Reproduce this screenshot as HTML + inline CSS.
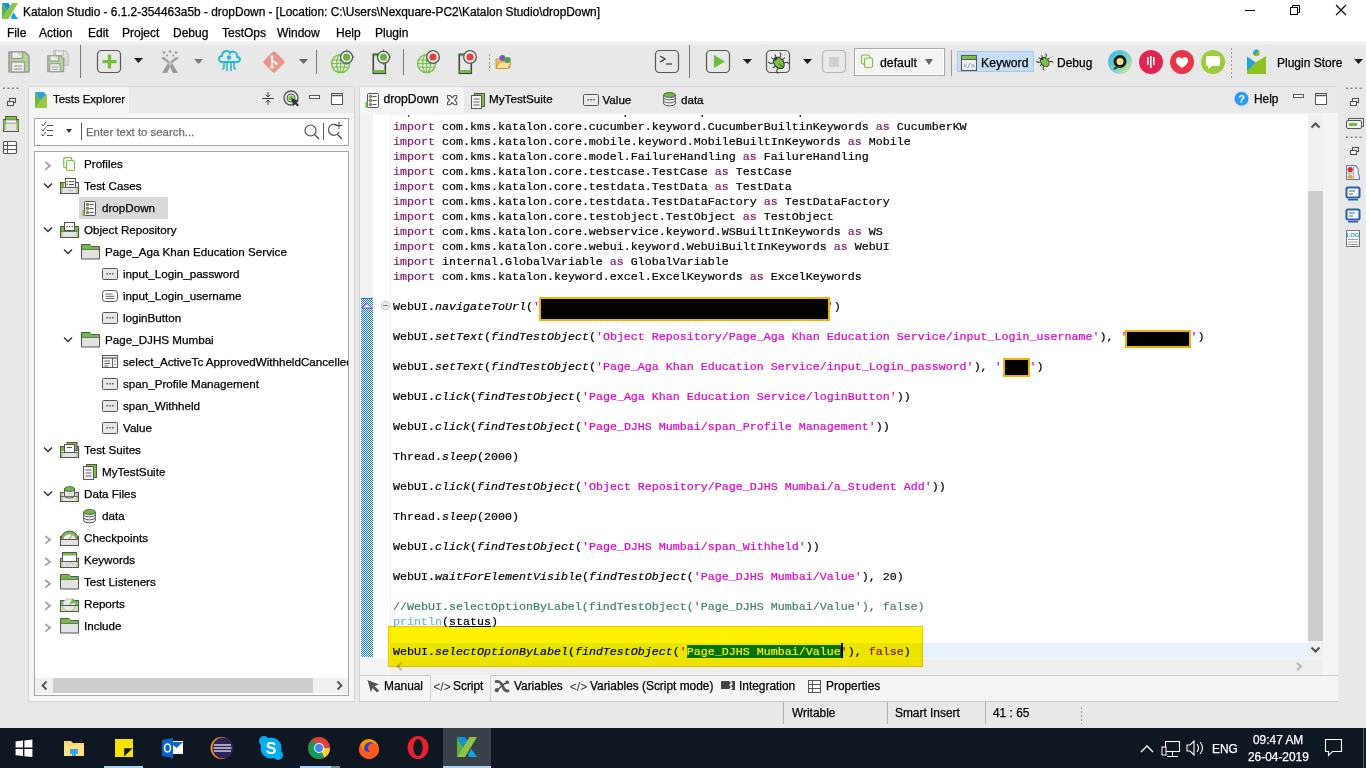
<!DOCTYPE html><html><head><meta charset="utf-8"><style>
*{margin:0;padding:0;box-sizing:border-box}
html,body{width:1366px;height:768px;overflow:hidden;background:#e8e8e8;font-family:"Liberation Sans",sans-serif;font-size:12px;color:#000;position:relative}
.a{position:absolute}
.t{position:absolute;white-space:pre;line-height:1;-webkit-text-stroke:0.25px currentColor}
svg{position:absolute;overflow:visible}
.cl{position:absolute;white-space:pre;-webkit-text-stroke:0.2px currentColor;font-family:"Liberation Mono",monospace;font-size:11.67px;line-height:15px;height:15px;color:#000}
.kw{color:#85186a}
.st{color:#e000d0}
.it{font-style:italic}
.cm{color:#3f7f6c}
.pl{color:#62b6f6}
</style></head><body><div class="a" style="left:0px;top:0px;width:1366px;height:41px;background:#fff"></div>
<div class="a" style="left:0px;top:41px;width:1366px;height:5px;background:linear-gradient(#f6f6f6,#e8e8e8)"></div>
<svg style="left:0px;top:0px" width="20" height="20" viewBox="0 0 20 20"><polygon points="2,3 2,19 7,11" fill="#5aaf45"/><polygon points="2,3 8.5,3 10.3,6 7,11" fill="#0d96dc"/><polygon points="2,19 12,3 18,3 8.5,19" fill="#8dc443"/><polygon points="11,16.5 13.5,12.5 18,19 11.5,19" fill="#0aa6e8"/></svg>
<div class="t" style="left:23px;top:7.25px;font-size:11.88px;color:#000;">Katalon Studio - 6.1.2-354463a5b - dropDown - [Location: C:\Users\Nexquare-PC2\Katalon Studio\dropDown]</div>
<svg style="left:1245px;top:5px" width="12" height="12" viewBox="0 0 12 12"><line x1="0" y1="5.5" x2="10" y2="5.5" stroke="#000" stroke-width="1"/></svg>
<svg style="left:1290px;top:5px" width="12" height="12" viewBox="0 0 12 12"><rect x="0.5" y="2.5" width="7" height="7" fill="none" stroke="#000"/><polyline points="2.5,2.5 2.5,0.5 9.5,0.5 9.5,7.5 7.5,7.5" fill="none" stroke="#000"/></svg>
<svg style="left:1336px;top:5px" width="12" height="12" viewBox="0 0 12 12"><line x1="0" y1="0" x2="10" y2="10" stroke="#000" stroke-width="1.1"/><line x1="10" y1="0" x2="0" y2="10" stroke="#000" stroke-width="1.1"/></svg>
<div class="t" style="left:7px;top:27.14px;font-size:12px;color:#000;">File</div>
<div class="t" style="left:39px;top:27.14px;font-size:12px;color:#000;">Action</div>
<div class="t" style="left:88px;top:27.14px;font-size:12px;color:#000;">Edit</div>
<div class="t" style="left:122px;top:27.14px;font-size:12px;color:#000;">Project</div>
<div class="t" style="left:173px;top:27.14px;font-size:12px;color:#000;">Debug</div>
<div class="t" style="left:222px;top:27.14px;font-size:12px;color:#000;">TestOps</div>
<div class="t" style="left:277px;top:27.14px;font-size:12px;color:#000;">Window</div>
<div class="t" style="left:336px;top:27.14px;font-size:12px;color:#000;">Help</div>
<div class="t" style="left:375px;top:27.14px;font-size:12px;color:#000;">Plugin</div>
<svg style="left:0px;top:44px" width="80" height="40" viewBox="0 0 80 40"><g transform="translate(8,7) scale(1.0)" opacity="1.0"><path d="M1,1 H17 L21,5 V21 H1 Z" fill="#b1d793" stroke="#9a9a9a" stroke-width="1.6" stroke-linejoin="round"/>
<rect x="3.5" y="1" width="11" height="6.5" fill="#f0f0f0" stroke="#9a9a9a" stroke-width="1.4"/><rect x="10.5" y="1" width="2" height="3.5" fill="#b1d793"/>
<rect x="3.5" y="11" width="13" height="10" fill="#f0f0f0" stroke="#9a9a9a" stroke-width="1.4"/><line x1="6" y1="15" x2="14" y2="15" stroke="#9a9a9a" stroke-width="1.2"/><line x1="6" y1="18" x2="14" y2="18" stroke="#9a9a9a" stroke-width="1.2"/></g><g transform="translate(53,6) scale(0.7272727272727273)" opacity="0.55"><path d="M1,1 H17 L21,5 V21 H1 Z" fill="#cfe6bb" stroke="#9a9a9a" stroke-width="1.6" stroke-linejoin="round"/>
<rect x="3.5" y="1" width="11" height="6.5" fill="#f0f0f0" stroke="#9a9a9a" stroke-width="1.4"/><rect x="10.5" y="1" width="2" height="3.5" fill="#cfe6bb"/>
<rect x="3.5" y="11" width="13" height="10" fill="#f0f0f0" stroke="#9a9a9a" stroke-width="1.4"/><line x1="6" y1="15" x2="14" y2="15" stroke="#9a9a9a" stroke-width="1.2"/><line x1="6" y1="18" x2="14" y2="18" stroke="#9a9a9a" stroke-width="1.2"/></g><g transform="translate(47,11) scale(0.7954545454545454)" opacity="1.0"><path d="M1,1 H17 L21,5 V21 H1 Z" fill="#b1d793" stroke="#9a9a9a" stroke-width="1.6" stroke-linejoin="round"/>
<rect x="3.5" y="1" width="11" height="6.5" fill="#f0f0f0" stroke="#9a9a9a" stroke-width="1.4"/><rect x="10.5" y="1" width="2" height="3.5" fill="#b1d793"/>
<rect x="3.5" y="11" width="13" height="10" fill="#f0f0f0" stroke="#9a9a9a" stroke-width="1.4"/><line x1="6" y1="15" x2="14" y2="15" stroke="#9a9a9a" stroke-width="1.2"/><line x1="6" y1="18" x2="14" y2="18" stroke="#9a9a9a" stroke-width="1.2"/></g></svg>
<div class="a" style="left:80px;top:45px;width:1px;height:33px;background:#7a7a7a"></div>
<svg style="left:0px;top:0px" width="1366" height="90" viewBox="0 0 1366 90"><rect x="97.5" y="50.5" width="23" height="22" rx="4" fill="none" stroke="#555" stroke-width="1.2"/><rect x="102.5" y="60" width="14" height="3.2" fill="#76bb3a"/><rect x="107.9" y="54.5" width="3.2" height="14" fill="#76bb3a"/><path d="M109,54 h2 v5 h5 v2 h-5 v5 h-2 v-5 h-5 v-2 h5z" fill="none"/></svg>
<svg style="left:133.5px;top:58px" width="9" height="6" viewBox="0 0 9 6"><polygon points="0,0 9,0 4.5,5" fill="#1a1a1a"/></svg>
<svg style="left:159px;top:50px" width="22" height="24" viewBox="0 0 22 24"><circle cx="5" cy="2.5" r="1.3" fill="#999"/><circle cx="11" cy="1.5" r="1.3" fill="#999"/><circle cx="17" cy="2.5" r="1.3" fill="#999"/><circle cx="8" cy="5.5" r="1" fill="#999"/><circle cx="14" cy="5.5" r="1" fill="#999"/><path d="M2,8 L9,13 L3,23 L8,23 L11,17 L14,23 L19,23 L13,13 L20,8 L17,7 L11,12 L5,7Z" fill="#9a9a9a"/><path d="M11,12 L9,13 L11,17 L13,13Z" fill="#c8c8c8"/></svg>
<svg style="left:193.5px;top:59px" width="9" height="6" viewBox="0 0 9 6"><polygon points="0,0 9,0 4.5,5" fill="#777"/></svg>
<svg style="left:217px;top:49px" width="24" height="26" viewBox="0 0 24 26"><path d="M5,13 C1,13 1,7 5,7 C5,2 11,0 13,4 C15,1 21,3 20,8 C24,8 24,13 20,13 Z" fill="none" stroke="#1fb5d4" stroke-width="1.8"/><circle cx="12" cy="8.5" r="2.2" fill="#1fb5d4"/><g stroke="#1fb5d4" stroke-width="1.5" fill="none"><path d="M7,13 v5 q0,2 -2,2"/><path d="M10,13 v9"/><path d="M14,13 v9"/><path d="M17,13 v5 q0,2 2,2"/></g></svg>
<svg style="left:262px;top:50px" width="24" height="24" viewBox="0 0 24 24"><rect x="4" y="4" width="16" height="16" rx="2" transform="rotate(45 12 12)" fill="#e9978a"/><g stroke="#fff" stroke-width="1.5" fill="none"><path d="M10,7 L10,17"/><path d="M10,10 L14,13"/></g><circle cx="10" cy="17" r="1.6" fill="#fff"/><circle cx="14" cy="13.5" r="1.6" fill="#fff"/><circle cx="10" cy="7" r="1.4" fill="#fff"/></svg>
<svg style="left:298.5px;top:59px" width="9" height="6" viewBox="0 0 9 6"><polygon points="0,0 9,0 4.5,5" fill="#666"/></svg>
<div class="a" style="left:316px;top:50px;width:1px;height:24px;background:#7a7a7a"></div>
<svg style="left:0px;top:0px" width="1366" height="90" viewBox="0 0 1366 90"><g><circle cx="340.6" cy="63.6" r="9" fill="none" stroke="#76c043" stroke-width="1.4"/><ellipse cx="340.6" cy="63.6" rx="4" ry="9" fill="none" stroke="#76c043" stroke-width="1.2"/><line x1="340.6" y1="54.6" x2="340.6" y2="72.6" stroke="#76c043" stroke-width="1.1"/><line x1="332.5" y1="60" x2="348.7" y2="60" stroke="#76c043" stroke-width="1.1"/><line x1="331.6" y1="63.6" x2="349.6" y2="63.6" stroke="#76c043" stroke-width="1.1"/><line x1="332.5" y1="67.2" x2="348.7" y2="67.2" stroke="#76c043" stroke-width="1.1"/></g><circle cx="346.6" cy="57.2" r="6" fill="#f2f2f2" stroke="#555" stroke-width="1.3"/><circle cx="346.6" cy="57.2" r="3.6" fill="#6bb33a"/><g stroke="#555" stroke-width="1"><line x1="346.6" y1="49.7" x2="346.6" y2="51.7"/><line x1="352.1" y1="57.2" x2="354.1" y2="57.2"/><line x1="346.6" y1="62.7" x2="346.6" y2="64.7"/></g><rect x="373.3" y="54.3" width="12" height="19" fill="none" stroke="#444" stroke-width="1.6"/><rect x="373.3" y="70.0" width="12" height="2.5" fill="#6cbf3c"/><rect x="374.0" y="54.7" width="4" height="1.5" fill="#6cbf3c"/><circle cx="383.5" cy="57.2" r="6" fill="#f2f2f2" stroke="#555" stroke-width="1.3"/><circle cx="383.5" cy="57.2" r="3.6" fill="#6bb33a"/><g stroke="#555" stroke-width="1"><line x1="383.5" y1="49.7" x2="383.5" y2="51.7"/><line x1="389.0" y1="57.2" x2="391.0" y2="57.2"/><line x1="383.5" y1="62.7" x2="383.5" y2="64.7"/></g><g><circle cx="426.6" cy="63.6" r="9" fill="none" stroke="#76c043" stroke-width="1.4"/><ellipse cx="426.6" cy="63.6" rx="4" ry="9" fill="none" stroke="#76c043" stroke-width="1.2"/><line x1="426.6" y1="54.6" x2="426.6" y2="72.6" stroke="#76c043" stroke-width="1.1"/><line x1="418.5" y1="60" x2="434.7" y2="60" stroke="#76c043" stroke-width="1.1"/><line x1="417.6" y1="63.6" x2="435.6" y2="63.6" stroke="#76c043" stroke-width="1.1"/><line x1="418.5" y1="67.2" x2="434.7" y2="67.2" stroke="#76c043" stroke-width="1.1"/></g><circle cx="433" cy="57" r="6.3" fill="#f2f2f2" stroke="#555" stroke-width="1.3"/><circle cx="433" cy="57" r="3.6" fill="#ee3b3b"/><rect x="459.3" y="54.3" width="12" height="19" fill="none" stroke="#444" stroke-width="1.6"/><rect x="459.3" y="70.0" width="12" height="2.5" fill="#6cbf3c"/><rect x="460.0" y="54.7" width="4" height="1.5" fill="#6cbf3c"/><circle cx="470" cy="57" r="6.3" fill="#f2f2f2" stroke="#555" stroke-width="1.3"/><circle cx="470" cy="57" r="3.6" fill="#ee3b3b"/></svg>
<div class="a" style="left:403px;top:49px;width:1px;height:26px;background:#7a7a7a"></div>
<svg style="left:489px;top:54px" width="2" height="18" viewBox="0 0 2 18"><line x1="0.5" y1="0" x2="0.5" y2="17" stroke="#999" stroke-dasharray="2,2"/></svg>
<svg style="left:495px;top:53px" width="18" height="17" viewBox="0 0 18 17"><path d="M1,6 h4 l1,-1 h9 v10 h-14z" fill="#f2c46a" stroke="#b78a30" stroke-width="0.8"/><path d="M1,15.5 l3,-6.5 h12 l-3,6.5z" fill="#fbdf98" stroke="#b78a30" stroke-width="0.8"/><circle cx="7.3" cy="5" r="3" fill="#6a5fb8"/><circle cx="12.5" cy="7" r="3" fill="#4fa04f"/></svg>
<svg style="left:0px;top:0px" width="1366" height="90" viewBox="0 0 1366 90"><rect x="655.5" y="50.5" width="23" height="22" rx="4" fill="none" stroke="#555" stroke-width="1.2"/><polyline points="660,56 665,59 660,62" fill="none" stroke="#333" stroke-width="1.2"/><line x1="666" y1="64" x2="672" y2="64" stroke="#333" stroke-width="1.2"/></svg>
<div class="a" style="left:689px;top:45px;width:1px;height:33px;background:#7a7a7a"></div>
<svg style="left:0px;top:0px" width="1366" height="90" viewBox="0 0 1366 90"><rect x="706.5" y="50.5" width="23" height="22" rx="4" fill="none" stroke="#555" stroke-width="1.2"/><polygon points="714,55 714,68 725,61.5" fill="#6cbf3c"/></svg>
<svg style="left:742.5px;top:58.5px" width="9" height="6" viewBox="0 0 9 6"><polygon points="0,0 9,0 4.5,5" fill="#1a1a1a"/></svg>
<svg style="left:0px;top:0px" width="1366" height="90" viewBox="0 0 1366 90"><rect x="766.5" y="50.5" width="23" height="22" rx="4" fill="none" stroke="#555" stroke-width="1.2"/><g transform="rotate(-40 778.5 62.5)"><g stroke="#333" stroke-width="1" fill="none"><path d="M774,59.5 L771.5,58 L771,55.5"/><path d="M783,59.5 L785.5,58 L786,55.5"/><path d="M774,63 L770.5,63"/><path d="M783,63 L786.5,63"/><path d="M774,66.5 L771.5,68 L771,70.5"/><path d="M783,66.5 L785.5,68 L786,70.5"/><path d="M777,56.5 L776,54"/><path d="M780,56.5 L781,54"/></g><ellipse cx="778.5" cy="63" rx="4.6" ry="6.3" fill="#7cc242" stroke="#2f3a2a" stroke-width="1.1"/><ellipse cx="778.5" cy="57.8" rx="2.2" ry="1.4" fill="#333"/><line x1="778.5" y1="64" x2="778.5" y2="68" stroke="#333" stroke-width="0.9"/></g></svg>
<svg style="left:802.5px;top:58.5px" width="9" height="6" viewBox="0 0 9 6"><polygon points="0,0 9,0 4.5,5" fill="#1a1a1a"/></svg>
<svg style="left:0px;top:0px" width="1366" height="90" viewBox="0 0 1366 90"><rect x="822.5" y="50.5" width="23" height="22" rx="4" fill="none" stroke="#b5b5b5" stroke-width="1.2"/><rect x="829" y="57" width="10" height="10" fill="#cfcfcf"/></svg>
<div class="a" style="left:854px;top:48px;width:91px;height:28px;background:#f4f4f4;border:1px solid #a8a8a8"></div>
<div class="a" style="left:855px;top:49px;width:89px;height:26px;border:1px solid #fff"></div>
<svg style="left:860px;top:54px" width="16" height="16" viewBox="0 0 16 16"><rect x="1.5" y="1" width="8" height="9" rx="1.5" fill="none" stroke="#7cc242" stroke-width="1.2"/><rect x="4.5" y="4" width="8" height="9.5" rx="1.5" fill="#f4f4f4" stroke="#7cc242" stroke-width="1.2"/></svg>
<div class="t" style="left:880px;top:56.87px;font-size:12.3px;color:#000;">default</div>
<svg style="left:925px;top:59px" width="8" height="6" viewBox="0 0 8 6"><polygon points="0,0 8,0 4,6" fill="#666"/></svg>
<div class="a" style="left:951px;top:50px;width:1px;height:26px;background:#9a9a9a"></div>
<div class="a" style="left:957px;top:51px;width:77px;height:21px;background:#c6def5;border:1px solid #a6c8ec"></div>
<svg style="left:961px;top:55px" width="16" height="16" viewBox="0 0 16 16"><rect x="0.5" y="0.5" width="15" height="15" fill="#eef2f6" stroke="#555" stroke-width="1.1"/><rect x="1" y="1" width="14" height="3" fill="#7cc242"/><line x1="0.5" y1="4.5" x2="15.5" y2="4.5" stroke="#555" stroke-width="1"/><text x="8" y="12.5" font-size="6.5" font-family="Liberation Mono" text-anchor="middle" fill="#666">&lt;/&gt;</text></svg>
<div class="t" style="left:981px;top:56.96px;font-size:12.2px;color:#000;">Keyword</div>
<svg style="left:0px;top:0px" width="1366" height="90" viewBox="0 0 1366 90"><g transform="translate(1044.5,62) scale(0.8) translate(-778.5,-63) rotate(-40 778.5 62.5)"><g stroke="#333" stroke-width="1.2" fill="none"><path d="M774,59.5 L771.5,58 L771,55.5"/><path d="M783,59.5 L785.5,58 L786,55.5"/><path d="M774,63 L770.5,63"/><path d="M783,63 L786.5,63"/><path d="M774,66.5 L771.5,68 L771,70.5"/><path d="M783,66.5 L785.5,68 L786,70.5"/><path d="M777,56.5 L776,54"/><path d="M780,56.5 L781,54"/></g><ellipse cx="778.5" cy="63" rx="4.6" ry="6.3" fill="#7cc242" stroke="#2f3a2a" stroke-width="1.2"/><ellipse cx="778.5" cy="57.8" rx="2.2" ry="1.4" fill="#333"/></g></svg>
<div class="t" style="left:1057px;top:57.14px;font-size:12px;color:#000;">Debug</div>
<svg style="left:1108px;top:50px" width="24" height="24" viewBox="0 0 24 24"><defs><linearGradient id="g1" x1="0" y1="0" x2="1" y2="1"><stop offset="0" stop-color="#28b5e0"/><stop offset="0.6" stop-color="#86d4c8"/><stop offset="1" stop-color="#f2e27a"/></linearGradient></defs><circle cx="12" cy="12" r="12" fill="url(#g1)"/><circle cx="12" cy="11.5" r="6.5" fill="#1a1a1a"/><path d="M7,17 l-2,3 l5,-2z" fill="#1a1a1a"/><circle cx="12" cy="11.5" r="3.5" fill="#f3e27a"/></svg>
<svg style="left:1139px;top:50px" width="24" height="24" viewBox="0 0 24 24"><circle cx="12" cy="12" r="12" fill="#df2650"/><g fill="#fff"><rect x="8" y="7" width="1.6" height="8"/><rect x="11" y="6" width="1.6" height="12"/><rect x="14" y="7" width="1.6" height="8"/></g></svg>
<svg style="left:1170px;top:50px" width="24" height="24" viewBox="0 0 24 24"><circle cx="12" cy="12" r="12" fill="#e8354a"/><path d="M12,18 C6,14 5,11 6.5,8.5 C8,6.5 11,7 12,9 C13,7 16,6.5 17.5,8.5 C19,11 18,14 12,18Z" fill="#fff"/></svg>
<svg style="left:1201px;top:50px" width="24" height="24" viewBox="0 0 24 24"><circle cx="12" cy="12" r="12" fill="#9ccc3a"/><path d="M5,8 q0,-2 2,-2 h10 q2,0 2,2 v6 q0,2 -2,2 h-6 l-4,3 v-3 q-2,0 -2,-2z" fill="#fff"/></svg>
<svg style="left:1231px;top:48px" width="2" height="30" viewBox="0 0 2 30"><line x1="0.5" y1="0" x2="0.5" y2="30" stroke="#999" stroke-dasharray="2,2"/></svg>
<svg style="left:0px;top:0px" width="1366" height="90" viewBox="0 0 1366 90"><polygon points="1247,56.5 1255.5,62.5 1266,56 1266,74 1247,74" fill="#8cc21f"/><polygon points="1247,56.5 1255.5,62.5 1247,71" fill="#27a1de"/><circle cx="1256.5" cy="53" r="3.2" fill="#8cc21f"/><path d="M1254.2,55.3 A3.2,3.2 0 0 1 1258.8,50.7Z" fill="#27a1de"/></svg>
<div class="t" style="left:1277px;top:56.64px;font-size:12px;color:#000;">Plugin Store</div>
<svg style="left:1353.5px;top:58.5px" width="9" height="6" viewBox="0 0 9 6"><polygon points="0,0 9,0 4.5,5" fill="#1a1a1a"/></svg>
<svg style="left:0px;top:0px" width="30" height="160" viewBox="0 0 30 160"><rect x="3.0" y="87.5" width="2" height="1.5" fill="#8a8070"/><rect x="7.5" y="87.5" width="2" height="1.5" fill="#8a8070"/><rect x="12.0" y="87.5" width="2" height="1.5" fill="#8a8070"/><rect x="16.5" y="87.5" width="2" height="1.5" fill="#8a8070"/><rect x="9.5" y="98.5" width="6" height="4" fill="#f5f5f5" stroke="#5a5048" stroke-width="1.1"/><rect x="7.5" y="101.5" width="6" height="4" fill="#f5f5f5" stroke="#5a5048" stroke-width="1.1"/><rect x="3.5" y="119.5" width="15" height="12" fill="#e4e4e4" stroke="#555" stroke-width="1"/><rect x="5.5" y="116.5" width="11" height="4" fill="#7cc242" stroke="#555" stroke-width="1"/><rect x="5.5" y="120" width="11" height="3" fill="#fff" stroke="#555" stroke-width="0.6"/><rect x="3.5" y="120" width="2" height="10" fill="#7cc242"/><rect x="16.5" y="120" width="2" height="10" fill="#7cc242"/><rect x="3.5" y="141.5" width="13" height="12" rx="1" fill="#f8f8f8" stroke="#555" stroke-width="1.1"/><line x1="3.5" y1="145.5" x2="16.5" y2="145.5" stroke="#555" stroke-width="1"/><line x1="3.5" y1="149.5" x2="16.5" y2="149.5" stroke="#555" stroke-width="1"/><line x1="7.5" y1="141.5" x2="7.5" y2="153.5" stroke="#555" stroke-width="1"/></svg>
<div class="a" style="left:28px;top:86px;width:327px;height:616px;background:#f5f5f5;border:1px solid #d4d4d4;border-radius:3px 3px 0 0"></div>
<div class="a" style="left:29px;top:87px;width:325px;height:26px;background:#e9e9e9"></div>
<div class="a" style="left:29px;top:87px;width:100px;height:26px;background:#f5f5f5;border-radius:3px 3px 0 0"></div>
<svg style="left:35px;top:92px" width="12" height="16" viewBox="0 0 12 16"><polygon points="0,0 8.5,0 12,3 12,16 0,16" fill="#9bc842"/><polygon points="0,0 5.8,7.8 0,16" fill="#6cb844"/><polygon points="0,0 8.5,0 11,2.5 5.8,7.8" fill="#27a4dd"/></svg>
<div class="t" style="left:53px;top:93.68px;font-size:11.4px;color:#000;">Tests Explorer</div>
<svg style="left:0px;top:0px" width="360" height="120" viewBox="0 0 360 120"><g stroke="#444" stroke-width="1"><line x1="262" y1="98.5" x2="274" y2="98.5"/><line x1="268" y1="92" x2="268" y2="97"/><polyline points="265.5,94.5 268,97 270.5,94.5" fill="none"/><line x1="268" y1="100" x2="268" y2="105"/><polyline points="265.5,102.5 268,100 270.5,102.5" fill="none"/></g><circle cx="291" cy="98" r="7" fill="none" stroke="#555" stroke-width="1.4"/><circle cx="291" cy="98" r="4" fill="none" stroke="#555" stroke-width="1"/><circle cx="291" cy="98" r="2.6" fill="#7cc242"/><path d="M291,98 l8,3 l-3,1 l3,3 l-1.5,1.5 l-3,-3 l-1,3z" fill="#333"/><rect x="309.5" y="95.5" width="10" height="3" fill="#fff" stroke="#555" stroke-width="1"/><rect x="331.5" y="93.5" width="11" height="11" fill="#fff" stroke="#555" stroke-width="1"/><line x1="331.5" y1="95.5" x2="342.5" y2="95.5" stroke="#555" stroke-width="1.5"/></svg>
<div class="a" style="left:34px;top:118px;width:315px;height:28px;background:#fff;border:1px solid #a5a5a5"></div>
<svg style="left:0px;top:110px" width="360" height="40" viewBox="0 0 360 40"><g stroke="#555" stroke-width="1" fill="none"><polyline points="41.5,14 43,16 46,12"/><polyline points="41.5,19 43,21 46,17"/><polyline points="41.5,24 43,26 46,22"/><line x1="47" y1="15.5" x2="53" y2="15.5"/><line x1="47" y1="20.5" x2="53" y2="20.5"/><line x1="47" y1="25.5" x2="53" y2="25.5"/></g><polygon points="66,19 72,19 69,23" fill="#333"/><line x1="81.5" y1="13" x2="81.5" y2="30" stroke="#555"/><circle cx="310.5" cy="20.5" r="5.5" fill="none" stroke="#444" stroke-width="1.1"/><line x1="314.5" y1="24.5" x2="319" y2="29" stroke="#444" stroke-width="1.1"/><line x1="323.5" y1="13" x2="323.5" y2="30" stroke="#555"/><path d="M338,16 A5.5,5.5 0 1 0 339,22" fill="none" stroke="#444" stroke-width="1.1"/><line x1="337.5" y1="24.5" x2="342" y2="29" stroke="#444" stroke-width="1.1"/><line x1="339" y1="12" x2="339" y2="19" stroke="#444"/><line x1="335.5" y1="15.5" x2="342.5" y2="15.5" stroke="#444"/></svg>
<div class="t" style="left:86px;top:126.68px;font-size:11.4px;color:#6d6d6d;">Enter text to search...</div>
<div class="a" style="left:34px;top:151px;width:315px;height:545px;background:#fff;border:1px solid #a5a5a5"></div>
<div class="a" style="left:79px;top:197px;width:89px;height:22px;background:#d9d9d9"></div>
<div class="a" style="left:35px;top:152px;width:313px;height:524px;overflow:hidden">
<div class="t" style="left:49px;top:6.46px;font-size:11.65px;color:#000;">Profiles</div>
<div class="t" style="left:49px;top:28.46px;font-size:11.65px;color:#000;">Test Cases</div>
<div class="t" style="left:67px;top:50.46px;font-size:11.65px;color:#000;">dropDown</div>
<div class="t" style="left:49px;top:72.46px;font-size:11.65px;color:#000;">Object Repository</div>
<div class="t" style="left:70px;top:94.46px;font-size:11.65px;color:#000;">Page_Aga Khan Education Service</div>
<div class="t" style="left:88px;top:116.46px;font-size:11.65px;color:#000;">input_Login_password</div>
<div class="t" style="left:88px;top:138.46px;font-size:11.65px;color:#000;">input_Login_username</div>
<div class="t" style="left:88px;top:160.46px;font-size:11.65px;color:#000;">loginButton</div>
<div class="t" style="left:70px;top:182.46px;font-size:11.65px;color:#000;">Page_DJHS Mumbai</div>
<div class="t" style="left:88px;top:204.46px;font-size:11.65px;color:#000;">select_ActiveTc ApprovedWithheldCancelledRejected</div>
<div class="t" style="left:88px;top:226.46px;font-size:11.65px;color:#000;">span_Profile Management</div>
<div class="t" style="left:88px;top:248.46px;font-size:11.65px;color:#000;">span_Withheld</div>
<div class="t" style="left:88px;top:270.46px;font-size:11.65px;color:#000;">Value</div>
<div class="t" style="left:49px;top:292.46px;font-size:11.65px;color:#000;">Test Suites</div>
<div class="t" style="left:67px;top:314.46px;font-size:11.65px;color:#000;">MyTestSuite</div>
<div class="t" style="left:49px;top:336.46px;font-size:11.65px;color:#000;">Data Files</div>
<div class="t" style="left:67px;top:358.46px;font-size:11.65px;color:#000;">data</div>
<div class="t" style="left:49px;top:380.46px;font-size:11.65px;color:#000;">Checkpoints</div>
<div class="t" style="left:49px;top:402.46px;font-size:11.65px;color:#000;">Keywords</div>
<div class="t" style="left:49px;top:424.46px;font-size:11.65px;color:#000;">Test Listeners</div>
<div class="t" style="left:49px;top:446.46px;font-size:11.65px;color:#000;">Reports</div>
<div class="t" style="left:49px;top:468.46px;font-size:11.65px;color:#000;">Include</div>
</div>
<svg style="left:0px;top:0px" width="360" height="700" viewBox="0 0 360 700"><polyline points="45.2,162 50.0,165.8 45.2,169.6" fill="none" stroke="#a0a0a0" stroke-width="1.8"/><rect x="63.7" y="157.7" width="8" height="10" rx="1.5" fill="none" stroke="#7cc242" stroke-width="1.2"/><rect x="66.5" y="160.5" width="8" height="10" rx="1.5" fill="#fff" stroke="#7cc242" stroke-width="1.2"/><polyline points="44,183.5 48,187.5 52,183.5" fill="none" stroke="#333" stroke-width="1.5"/><rect x="60.5" y="182.5" width="18" height="11" fill="#e4e4e4" stroke="#555" stroke-width="1"/><rect x="61" y="183" width="3" height="4" fill="#6cbf3c"/><rect x="65.5" y="178.5" width="10" height="9" fill="#fff" stroke="#555" stroke-width="1"/><g stroke="#555" stroke-width="1"><line x1="69" y1="181.5" x2="74" y2="181.5"/><line x1="69" y1="184.5" x2="74" y2="184.5"/></g><circle cx="67.3" cy="181.5" r="0.9" fill="#6cbf3c"/><circle cx="67.3" cy="184.5" r="0.9" fill="#6cbf3c"/><line x1="60.5" y1="187.5" x2="78.5" y2="187.5" stroke="#555" stroke-width="0.8"/><rect x="61" y="188" width="2" height="5" fill="#a9d88a"/><rect x="76" y="188" width="2" height="5" fill="#a9d88a"/><line x1="68" y1="190.5" x2="73" y2="190.5" stroke="#bbb"/><rect x="84.5" y="201.5" width="11" height="14" rx="1" fill="#f4f4f4" stroke="#555" stroke-width="1"/><rect x="82.5" y="210" width="2" height="6" fill="#6cbf3c"/><g fill="#7cb84a" stroke="#555" stroke-width="0.8"><circle cx="87.5" cy="204.5" r="1.2"/><circle cx="87.5" cy="208.5" r="1.2"/><circle cx="87.5" cy="212.5" r="1.2"/></g><g stroke="#555" stroke-width="1"><line x1="89.5" y1="204.5" x2="93.5" y2="204.5"/><line x1="89.5" y1="208.5" x2="93.5" y2="208.5"/><line x1="89.5" y1="212.5" x2="93.5" y2="212.5"/></g><polyline points="44,227.5 48,231.5 52,227.5" fill="none" stroke="#333" stroke-width="1.5"/><rect x="60.5" y="226.5" width="18" height="11" fill="#e4e4e4" stroke="#555" stroke-width="1"/><rect x="61" y="227" width="3" height="4" fill="#6cbf3c"/><rect x="75" y="227" width="3" height="4" fill="#6cbf3c"/><rect x="64.5" y="222.5" width="10" height="8" fill="#fff" stroke="#555" stroke-width="1"/><g fill="#555"><rect x="66.5" y="226" width="1.3" height="1.3"/><rect x="69" y="226" width="1.3" height="1.3"/><rect x="71.5" y="226" width="1.3" height="1.3"/></g><line x1="60.5" y1="231.5" x2="78.5" y2="231.5" stroke="#555" stroke-width="0.8"/><rect x="61" y="232" width="2" height="5" fill="#a9d88a"/><rect x="76" y="232" width="2" height="5" fill="#a9d88a"/><polyline points="64,249.5 68,253.5 72,249.5" fill="none" stroke="#333" stroke-width="1.5"/><path d="M81.5,259 V244.5 H90 L91.5,246.5 H99.5 V259Z" fill="#e3e3e3" stroke="#555" stroke-width="1"/><path d="M82,245 H89.7 L91.2,247 H99 V249 H82Z" fill="#6cbf3c"/><line x1="81.5" y1="249.5" x2="99.5" y2="249.5" stroke="#555" stroke-width="0.8"/><rect x="102.5" y="268.5" width="15" height="11" rx="1" fill="#e8e8e8" stroke="#555" stroke-width="1"/><g fill="#555"><rect x="106.5" y="273" width="1.5" height="1.5"/><rect x="109.3" y="273" width="1.5" height="1.5"/><rect x="112.1" y="273" width="1.5" height="1.5"/></g><rect x="102.5" y="290.5" width="15" height="11" rx="3" fill="#fff" stroke="#555" stroke-width="1"/><g stroke="#555" stroke-width="0.9"><line x1="105.5" y1="294" x2="112.5" y2="294"/><line x1="105.5" y1="296.3" x2="114.5" y2="296.3"/><line x1="105.5" y1="298.6" x2="114.5" y2="298.6"/></g><rect x="102.5" y="312.5" width="15" height="11" rx="1" fill="#e8e8e8" stroke="#555" stroke-width="1"/><g fill="#555"><rect x="106.5" y="317" width="1.5" height="1.5"/><rect x="109.3" y="317" width="1.5" height="1.5"/><rect x="112.1" y="317" width="1.5" height="1.5"/></g><polyline points="64,337.5 68,341.5 72,337.5" fill="none" stroke="#333" stroke-width="1.5"/><path d="M81.5,347 V332.5 H90 L91.5,334.5 H99.5 V347Z" fill="#e3e3e3" stroke="#555" stroke-width="1"/><path d="M82,333 H89.7 L91.2,335 H99 V337 H82Z" fill="#6cbf3c"/><line x1="81.5" y1="337.5" x2="99.5" y2="337.5" stroke="#555" stroke-width="0.8"/><rect x="102.5" y="355.5" width="15" height="12" fill="#f4f4f4" stroke="#555" stroke-width="1"/><line x1="102.5" y1="358" x2="117.5" y2="358" stroke="#555" stroke-width="1.2"/><line x1="112.5" y1="358" x2="112.5" y2="367.5" stroke="#555" stroke-width="0.9"/><g stroke="#555" stroke-width="0.9"><line x1="104.5" y1="361" x2="110" y2="361"/><line x1="104.5" y1="363.5" x2="110" y2="363.5"/><line x1="104.5" y1="366" x2="108" y2="366"/></g><polygon points="114,361.5 116,361.5 115,360" fill="#3a8ad8"/><polygon points="114,364 116,364 115,365.5" fill="#3a8ad8"/><rect x="102.5" y="378.5" width="15" height="11" rx="1" fill="#e8e8e8" stroke="#555" stroke-width="1"/><g fill="#555"><rect x="106.5" y="383" width="1.5" height="1.5"/><rect x="109.3" y="383" width="1.5" height="1.5"/><rect x="112.1" y="383" width="1.5" height="1.5"/></g><rect x="102.5" y="400.5" width="15" height="11" rx="1" fill="#e8e8e8" stroke="#555" stroke-width="1"/><g fill="#555"><rect x="106.5" y="405" width="1.5" height="1.5"/><rect x="109.3" y="405" width="1.5" height="1.5"/><rect x="112.1" y="405" width="1.5" height="1.5"/></g><rect x="102.5" y="422.5" width="15" height="11" rx="1" fill="#e8e8e8" stroke="#555" stroke-width="1"/><g fill="#555"><rect x="106.5" y="427" width="1.5" height="1.5"/><rect x="109.3" y="427" width="1.5" height="1.5"/><rect x="112.1" y="427" width="1.5" height="1.5"/></g><polyline points="44,447.5 48,451.5 52,447.5" fill="none" stroke="#333" stroke-width="1.5"/><rect x="60.5" y="446.5" width="18" height="11" fill="#e4e4e4" stroke="#555" stroke-width="1"/><rect x="61" y="447" width="3" height="4" fill="#6cbf3c"/><rect x="75" y="447" width="3" height="4" fill="#6cbf3c"/><rect x="67" y="442.5" width="10" height="8" fill="#7cc242" stroke="#555" stroke-width="1"/><rect x="64.5" y="444.5" width="10" height="8" fill="#fff" stroke="#555" stroke-width="1"/><line x1="67" y1="447.5" x2="72" y2="447.5" stroke="#555"/><line x1="60.5" y1="452.5" x2="78.5" y2="452.5" stroke="#555" stroke-width="0.8"/><rect x="61" y="453" width="2" height="4" fill="#a9d88a"/><rect x="76" y="453" width="2" height="4" fill="#a9d88a"/><rect x="86.5" y="464.5" width="10" height="13" fill="#7cc242" stroke="#555" stroke-width="1"/><rect x="83.5" y="466.5" width="10" height="13" fill="#f4f4f4" stroke="#555" stroke-width="1"/><g stroke="#555" stroke-width="0.9"><line x1="85.5" y1="470" x2="91.5" y2="470"/><line x1="85.5" y1="473" x2="91.5" y2="473"/><line x1="85.5" y1="476" x2="91.5" y2="476"/></g><polyline points="44,491.5 48,495.5 52,491.5" fill="none" stroke="#333" stroke-width="1.5"/><rect x="60.5" y="492.5" width="18" height="9" fill="#e4e4e4" stroke="#555" stroke-width="1"/><rect x="61" y="493" width="2" height="8" fill="#a9d88a"/><rect x="76" y="493" width="2" height="8" fill="#a9d88a"/><path d="M64.5,489 V496 A5,2 0 0 0 74.5,496 V489" fill="#e4e4e4" stroke="#555" stroke-width="1"/><ellipse cx="69.5" cy="489" rx="5" ry="2.3" fill="#6cbf3c" stroke="#555" stroke-width="1"/><line x1="60.5" y1="496.5" x2="78.5" y2="496.5" stroke="#555" stroke-width="0.8"/><path d="M83.7,512 V521 A6,2.5 0 0 0 95.3,521 V512" fill="#f0f0f0" stroke="#555" stroke-width="1"/><path d="M83.7,515 A6,2.5 0 0 0 95.3,515 M83.7,518 A6,2.5 0 0 0 95.3,518" fill="none" stroke="#555" stroke-width="0.9"/><ellipse cx="89.5" cy="512" rx="5.8" ry="2.4" fill="#6cbf3c" stroke="#555" stroke-width="1"/><polyline points="45.2,536 50.0,539.8 45.2,543.6" fill="none" stroke="#a0a0a0" stroke-width="1.8"/><rect x="60.5" y="536.5" width="18" height="9" fill="#c9e6b4" stroke="#555" stroke-width="1"/><path d="M61,539 A8.5,8 0 0 1 78,539" fill="#6cbf3c" stroke="#555" stroke-width="1"/><path d="M63,540 A6.5,6 0 0 1 76,540" fill="#eee" stroke="#aaa" stroke-width="0.8"/><rect x="61" y="540" width="17" height="5" fill="#e4e4e4"/><line x1="69.5" y1="539" x2="72" y2="535" stroke="#888"/><rect x="60.5" y="539.5" width="18" height="6" fill="none" stroke="#555" stroke-width="1"/><polyline points="45.2,558 50.0,561.8 45.2,565.6" fill="none" stroke="#a0a0a0" stroke-width="1.8"/><rect x="60.5" y="558.5" width="18" height="9" fill="#e4e4e4" stroke="#555" stroke-width="1"/><rect x="61" y="559" width="2" height="8" fill="#a9d88a"/><rect x="76" y="559" width="2" height="8" fill="#a9d88a"/><rect x="62.5" y="552.5" width="14" height="9" fill="#fff" stroke="#555" stroke-width="1"/><rect x="63" y="553" width="13" height="2.5" fill="#6cbf3c"/><text x="69.5" y="565.5" font-size="5" font-family="Liberation Mono" text-anchor="middle" fill="#999">&lt;/&gt;</text><line x1="60.5" y1="561.5" x2="78.5" y2="561.5" stroke="#555" stroke-width="0.8"/><polyline points="45.2,580 50.0,583.8 45.2,587.6" fill="none" stroke="#a0a0a0" stroke-width="1.8"/><path d="M60.5,589 V574.5 H69 L70.5,576.5 H78.5 V589Z" fill="#e3e3e3" stroke="#555" stroke-width="1"/><path d="M61,575 H68.7 L70.2,577 H78 V579 H61Z" fill="#6cbf3c"/><line x1="60.5" y1="579.5" x2="78.5" y2="579.5" stroke="#555" stroke-width="0.8"/><polyline points="45.2,602 50.0,605.8 45.2,609.6" fill="none" stroke="#a0a0a0" stroke-width="1.8"/><rect x="60.5" y="600.5" width="18" height="11" fill="#c9e6b4" stroke="#555" stroke-width="1"/><rect x="61" y="601" width="17" height="4" fill="#6cbf3c"/><circle cx="69" cy="605" r="6.3" fill="#e8e8e8" stroke="#aaa" stroke-width="0.8"/><path d="M69,605 L73,598 L75.5,602Z" fill="#6cbf3c"/><rect x="60.5" y="605.5" width="18" height="6" fill="none" stroke="#555" stroke-width="1"/><polyline points="45.2,624 50.0,627.8 45.2,631.6" fill="none" stroke="#a0a0a0" stroke-width="1.8"/><path d="M60.5,633 V618.5 H69 L70.5,620.5 H78.5 V633Z" fill="#e3e3e3" stroke="#555" stroke-width="1"/><path d="M61,619 H68.7 L70.2,621 H78 V623 H61Z" fill="#6cbf3c"/><line x1="60.5" y1="623.5" x2="78.5" y2="623.5" stroke="#555" stroke-width="0.8"/></svg>
<div class="a" style="left:35px;top:678px;width:313px;height:15px;background:#f0f0f0"></div>
<div class="a" style="left:53px;top:678px;width:260px;height:15px;background:#cdcdcd"></div>
<svg style="left:0px;top:0px" width="360" height="700" viewBox="0 0 360 700"><polyline points="46.5,681.5 42.5,685.5 46.5,689.5" fill="none" stroke="#505050" stroke-width="1.8"/><polyline points="337.5,681.5 341.5,685.5 337.5,689.5" fill="none" stroke="#505050" stroke-width="1.8"/></svg>
<div class="a" style="left:359px;top:86px;width:979px;height:616px;background:#f5f5f5;border:1px solid #d4d4d4;border-right:none;border-bottom:none;border-radius:3px 3px 0 0"></div>
<div class="a" style="left:360px;top:87px;width:978px;height:26px;background:#e9e9e9"></div>
<div class="a" style="left:360px;top:87px;width:104px;height:26px;background:#f5f5f5;border-radius:3px 3px 0 0"></div>
<svg style="left:0px;top:0px" width="1366" height="120" viewBox="0 0 1366 120"><rect x="367.5" y="93.5" width="11" height="14" rx="1" fill="#f4f4f4" stroke="#555" stroke-width="1"/><rect x="365.5" y="102" width="2" height="6" fill="#6cbf3c"/><g fill="#7cb84a" stroke="#555" stroke-width="0.8"><circle cx="370.5" cy="96.5" r="1.2"/><circle cx="370.5" cy="100.5" r="1.2"/><circle cx="370.5" cy="104.5" r="1.2"/></g><g stroke="#555" stroke-width="1"><line x1="372.5" y1="96.5" x2="376.5" y2="96.5"/><line x1="372.5" y1="100.5" x2="376.5" y2="100.5"/><line x1="372.5" y1="104.5" x2="376.5" y2="104.5"/></g><path d="M447.5,95.5 H450 L452.2,97.8 L454.5,95.5 H456.8 V98 L454.5,100.2 L456.8,102.5 V104.8 H454.5 L452.2,102.5 L450,104.8 H447.5 V102.5 L449.8,100.2 L447.5,98 Z" fill="#fafafa" stroke="#555" stroke-width="1.1" stroke-linejoin="round"/><rect x="474.5" y="93.5" width="10" height="13" fill="#7cc242" stroke="#555" stroke-width="1"/><rect x="471.5" y="95.5" width="10" height="13" fill="#f4f4f4" stroke="#555" stroke-width="1"/><g stroke="#555" stroke-width="0.9"><line x1="473.5" y1="99" x2="479.5" y2="99"/><line x1="473.5" y1="102" x2="479.5" y2="102"/><line x1="473.5" y1="105" x2="479.5" y2="105"/></g><rect x="583.5" y="94.5" width="15" height="11" rx="1" fill="#e8e8e8" stroke="#555" stroke-width="1"/><g fill="#555"><rect x="587.5" y="99" width="1.5" height="1.5"/><rect x="590.3" y="99" width="1.5" height="1.5"/><rect x="593.1" y="99" width="1.5" height="1.5"/></g><path d="M663.7,95 V104 A6,2.5 0 0 0 675.3,104 V95" fill="#f0f0f0" stroke="#555" stroke-width="1"/><path d="M663.7,98 A6,2.5 0 0 0 675.3,98 M663.7,101 A6,2.5 0 0 0 675.3,101" fill="none" stroke="#555" stroke-width="0.9"/><ellipse cx="669.5" cy="95" rx="5.8" ry="2.4" fill="#6cbf3c" stroke="#555" stroke-width="1"/></svg>
<div class="t" style="left:383.5px;top:93.05px;font-size:12.1px;color:#000;">dropDown</div>
<div class="t" style="left:489px;top:93.41px;font-size:11.7px;color:#000;">MyTestSuite</div>
<div class="t" style="left:602.5px;top:93.50px;font-size:11.6px;color:#000;">Value</div>
<div class="t" style="left:681px;top:93.50px;font-size:11.6px;color:#000;">data</div>
<svg style="left:0px;top:0px" width="1366" height="120" viewBox="0 0 1366 120"><circle cx="1241.5" cy="98.7" r="7" fill="#2b9af3"/><text x="1241.5" y="103" font-size="11" font-weight="bold" font-family="Liberation Sans" text-anchor="middle" fill="#fff">?</text><rect x="1293.5" y="94.5" width="10" height="3" fill="#fff" stroke="#555" stroke-width="1"/><rect x="1315.5" y="93.5" width="11" height="11" fill="#fff" stroke="#555" stroke-width="1"/><line x1="1315.5" y1="95.5" x2="1326.5" y2="95.5" stroke="#555" stroke-width="1.5"/></svg>
<div class="t" style="left:1254px;top:94.23px;font-size:11.9px;color:#000;">Help</div>
<div class="a" style="left:373px;top:115px;width:935px;height:543px;background:#fff"></div>
<div class="a" style="left:360px;top:115px;width:13px;height:543px;background:#f2f2f2"></div>
<div class="a" style="left:390px;top:115px;width:1px;height:543px;background:#f0f0f0"></div>
<div class="a" style="left:361px;top:298px;width:12px;height:359px;background-color:#fff;background-image:repeating-conic-gradient(#1a7ee8 0 25%, #ffffff 0 50%);background-size:2px 2px"></div>
<div class="a" style="left:361px;top:298px;width:12px;height:1px;background:#1a7ee8"></div>
<svg style="left:0px;top:0px" width="1366" height="320" viewBox="0 0 1366 320"><polygon points="367,303.5 372,308 362,308" fill="#fff" stroke="#7a3fc0" stroke-width="1"/><circle cx="385.5" cy="305.5" r="4.3" fill="#e3eef8" stroke="#b0bcc8" stroke-width="0.8"/><line x1="383" y1="305.5" x2="388" y2="305.5" stroke="#707880" stroke-width="1"/></svg>
<div class="a" style="left:391px;top:643px;width:917px;height:15px;background:#e8f2fe"></div>
<div class="a" style="left:1308px;top:115px;width:15px;height:543px;background:#f0f0f0"></div>
<div class="a" style="left:1308px;top:191px;width:15px;height:450px;background:#cdcdcd"></div>
<svg style="left:0px;top:0px" width="1366" height="700" viewBox="0 0 1366 700"><polyline points="1311.5,127.5 1315.5,123.5 1319.5,127.5" fill="none" stroke="#505050" stroke-width="2"/><polyline points="1311.5,647.5 1315.5,651.5 1319.5,647.5" fill="none" stroke="#505050" stroke-width="2"/></svg>
<div class="a" style="left:391px;top:659px;width:932px;height:16px;background:#efefef"></div>
<svg style="left:0px;top:0px" width="1366" height="700" viewBox="0 0 1366 700"><polyline points="401.5,663 397.5,666.5 401.5,670" fill="none" stroke="#b4b4b4" stroke-width="1.8"/><polyline points="1297,663 1301,666.5 1297,670" fill="none" stroke="#b4b4b4" stroke-width="1.8"/></svg>
<div class="a" style="left:391px;top:115px;width:917px;height:543px;overflow:hidden">
<div class="cl" style="left:2px;top:-9.60px"><span class="kw">import</span> com.kms.katalon.core.checkpoint.Checkpoint <span class="kw">as</span> Checkpoint</div>
<div class="cl" style="left:2px;top:5.40px"><span class="kw">import</span> com.kms.katalon.core.cucumber.keyword.CucumberBuiltinKeywords <span class="kw">as</span> CucumberKW</div>
<div class="cl" style="left:2px;top:20.40px"><span class="kw">import</span> com.kms.katalon.core.mobile.keyword.MobileBuiltInKeywords <span class="kw">as</span> Mobile</div>
<div class="cl" style="left:2px;top:35.40px"><span class="kw">import</span> com.kms.katalon.core.model.FailureHandling <span class="kw">as</span> FailureHandling</div>
<div class="cl" style="left:2px;top:50.40px"><span class="kw">import</span> com.kms.katalon.core.testcase.TestCase <span class="kw">as</span> TestCase</div>
<div class="cl" style="left:2px;top:65.40px"><span class="kw">import</span> com.kms.katalon.core.testdata.TestData <span class="kw">as</span> TestData</div>
<div class="cl" style="left:2px;top:80.40px"><span class="kw">import</span> com.kms.katalon.core.testdata.TestDataFactory <span class="kw">as</span> TestDataFactory</div>
<div class="cl" style="left:2px;top:95.40px"><span class="kw">import</span> com.kms.katalon.core.testobject.TestObject <span class="kw">as</span> TestObject</div>
<div class="cl" style="left:2px;top:110.40px"><span class="kw">import</span> com.kms.katalon.core.webservice.keyword.WSBuiltInKeywords <span class="kw">as</span> WS</div>
<div class="cl" style="left:2px;top:125.40px"><span class="kw">import</span> com.kms.katalon.core.webui.keyword.WebUiBuiltInKeywords <span class="kw">as</span> WebUI</div>
<div class="cl" style="left:2px;top:140.40px"><span class="kw">import</span> internal.GlobalVariable <span class="kw">as</span> GlobalVariable</div>
<div class="cl" style="left:2px;top:155.40px"><span class="kw">import</span> com.kms.katalon.keyword.excel.ExcelKeywords <span class="kw">as</span> ExcelKeywords</div>
<div class="cl" style="left:2px;top:185.40px">WebUI.<span class="it">navigateToUrl</span>(<span class="st">&#x27;                                         &#x27;</span>)</div>
<div class="cl" style="left:2px;top:215.40px">WebUI.<span class="it">setText</span>(<span class="it">findTestObject</span>(<span class="st">&#x27;Object Repository/Page_Aga Khan Education Service/input_Login_username&#x27;</span>), <span class="st">&#x27;         &#x27;</span>)</div>
<div class="cl" style="left:2px;top:245.40px">WebUI.<span class="it">setText</span>(<span class="it">findTestObject</span>(<span class="st">&#x27;Page_Aga Khan Education Service/input_Login_password&#x27;</span>), <span class="st">&#x27;    &#x27;</span>)</div>
<div class="cl" style="left:2px;top:275.40px">WebUI.<span class="it">click</span>(<span class="it">findTestObject</span>(<span class="st">&#x27;Page_Aga Khan Education Service/loginButton&#x27;</span>))</div>
<div class="cl" style="left:2px;top:305.40px">WebUI.<span class="it">click</span>(<span class="it">findTestObject</span>(<span class="st">&#x27;Page_DJHS Mumbai/span_Profile Management&#x27;</span>))</div>
<div class="cl" style="left:2px;top:335.40px">Thread.<span class="it">sleep</span>(2000)</div>
<div class="cl" style="left:2px;top:365.40px">WebUI.<span class="it">click</span>(<span class="it">findTestObject</span>(<span class="st">&#x27;Object Repository/Page_DJHS Mumbai/a_Student Add&#x27;</span>))</div>
<div class="cl" style="left:2px;top:395.40px">Thread.<span class="it">sleep</span>(2000)</div>
<div class="cl" style="left:2px;top:425.40px">WebUI.<span class="it">click</span>(<span class="it">findTestObject</span>(<span class="st">&#x27;Page_DJHS Mumbai/span_Withheld&#x27;</span>))</div>
<div class="cl" style="left:2px;top:455.40px">WebUI.<span class="it">waitForElementVisible</span>(<span class="it">findTestObject</span>(<span class="st">&#x27;Page_DJHS Mumbai/Value&#x27;</span>), 20)</div>
<div class="cl" style="left:2px;top:485.40px"><span class="cm">//WebUI.selectOptionByLabel(findTestObject(&#x27;Page_DJHS Mumbai/Value&#x27;), false)</span></div>
<div class="cl" style="left:2px;top:500.40px"><span class="pl">println</span>(<span style="text-decoration:underline">status</span>)</div>
<div class="cl" style="left:2px;top:530.40px">WebUI.<span class="it">selectOptionByLabel</span>(<span class="it">findTestObject</span>(<span class="st">&#x27;</span><span style="background:#0078d7;color:#fff">Page_DJHS Mumbai/Value</span><span class="st">&#x27;</span>), <span class="kw">false</span>)</div>
</div>
<div class="a" style="left:841px;top:643px;width:2px;height:15px;background:#000"></div>
<div class="a" style="left:539px;top:297px;width:291px;height:24px;background:#000;border:2px solid #f0b400"></div>
<div class="a" style="left:1125px;top:330px;width:66px;height:18px;background:#000;border:2px solid #f0b400"></div>
<div class="a" style="left:1003px;top:358px;width:27px;height:19px;background:#000;border:2px solid #f0b400"></div>
<div class="a" style="left:388px;top:626px;width:535px;height:41px;background:#fff200;mix-blend-mode:multiply;box-shadow:inset 0 0 0 1px #f5c400"></div>
<div class="a" style="left:360px;top:675px;width:978px;height:26px;background:#f5f5f5"></div>
<div class="a" style="left:360px;top:675px;width:71px;height:1px;background:#c8c8c8"></div>
<div class="a" style="left:490px;top:675px;width:848px;height:1px;background:#c8c8c8"></div>
<div class="a" style="left:359px;top:701px;width:979px;height:1px;background:#c8c8c8"></div>
<div class="a" style="left:430px;top:675px;width:1px;height:26px;background:#d0d0d0"></div>
<div class="a" style="left:490px;top:675px;width:1px;height:26px;background:#d0d0d0"></div>
<svg style="left:0px;top:0px" width="1366" height="768" viewBox="0 0 1366 768"><path d="M367.5,680 L379,684.5 L374.5,686 L379,690.5 L377,692.5 L372.5,688 L371,692.5Z" fill="#555"/><text x="442" y="691" font-size="12" font-family="Liberation Sans" text-anchor="middle" fill="#333">&lt;/&gt;</text><path d="M496,681.5 C500,680.5 501.5,683 503,687 C504,690 505.5,691 508,691" fill="none" stroke="#555" stroke-width="2.8" stroke-linecap="round"/><path d="M507,682.5 C503.5,683.5 501,686.5 497.5,690" fill="none" stroke="#555" stroke-width="1.5"/><circle cx="507.2" cy="682.3" r="1.8" fill="#555"/><circle cx="496.8" cy="690.2" r="2.1" fill="#555"/><text x="578.5" y="691" font-size="12" font-family="Liberation Sans" text-anchor="middle" fill="#333">&lt;/&gt;</text><path d="M721,681 h8 l2,2 l-2,2 l2,2 l-2,2 h-8z" fill="#444"/><path d="M731,681 h4 v9 h-4 l2,-2 l-2,-2 l2,-2z" fill="#444"/><rect x="808.5" y="680.5" width="12" height="12" fill="#fff" stroke="#555"/><line x1="808.5" y1="684.5" x2="820.5" y2="684.5" stroke="#555"/><line x1="808.5" y1="688.5" x2="820.5" y2="688.5" stroke="#555"/><line x1="812.5" y1="680.5" x2="812.5" y2="692.5" stroke="#555"/></svg>
<div class="t" style="left:384px;top:681.23px;font-size:11.9px;color:#000;">Manual</div>
<div class="t" style="left:453px;top:681.23px;font-size:11.9px;color:#000;">Script</div>
<div class="t" style="left:514px;top:681.23px;font-size:11.9px;color:#000;">Variables</div>
<div class="t" style="left:590px;top:681.23px;font-size:11.9px;color:#000;">Variables (Script mode)</div>
<div class="t" style="left:739px;top:681.23px;font-size:11.9px;color:#000;">Integration</div>
<div class="t" style="left:826px;top:681.23px;font-size:11.9px;color:#000;">Properties</div>
<div class="a" style="left:783px;top:702px;width:1px;height:22px;background:#b0b0b0"></div>
<div class="a" style="left:887px;top:702px;width:1px;height:22px;background:#b0b0b0"></div>
<div class="a" style="left:985px;top:702px;width:1px;height:22px;background:#b0b0b0"></div>
<svg style="left:1081px;top:707px" width="2" height="18" viewBox="0 0 2 18"><line x1="0.5" y1="0" x2="0.5" y2="17" stroke="#999" stroke-dasharray="2,2"/></svg>
<div class="t" style="left:792px;top:708.23px;font-size:11.9px;color:#000;">Writable</div>
<div class="t" style="left:895px;top:708.23px;font-size:11.9px;color:#000;">Smart Insert</div>
<div class="t" style="left:993px;top:708.23px;font-size:11.9px;color:#000;">41 : 65</div>
<svg style="left:0px;top:0px" width="1366" height="260" viewBox="0 0 1366 260"><rect x="1346.0" y="87.5" width="2" height="1.5" fill="#8a8070"/><rect x="1350.5" y="87.5" width="2" height="1.5" fill="#8a8070"/><rect x="1355.0" y="87.5" width="2" height="1.5" fill="#8a8070"/><rect x="1359.5" y="87.5" width="2" height="1.5" fill="#8a8070"/><rect x="1352.5" y="98.5" width="6" height="4" fill="#f5f5f5" stroke="#5a5048" stroke-width="1.1"/><rect x="1350.5" y="101.5" width="6" height="4" fill="#f5f5f5" stroke="#5a5048" stroke-width="1.1"/><rect x="1346.5" y="120.5" width="15" height="8" rx="1.5" fill="#f0f0f0" stroke="#555" stroke-width="1"/><rect x="1349" y="123" width="8" height="3" fill="#6cbf3c"/><path d="M1348.5,120.5 v-2 h15 v8 h-2" fill="none" stroke="#555" stroke-width="1"/><rect x="1346.0" y="136.5" width="2" height="1.5" fill="#8a8070"/><rect x="1350.5" y="136.5" width="2" height="1.5" fill="#8a8070"/><rect x="1355.0" y="136.5" width="2" height="1.5" fill="#8a8070"/><rect x="1359.5" y="136.5" width="2" height="1.5" fill="#8a8070"/><rect x="1352.5" y="147.5" width="6" height="4" fill="#f5f5f5" stroke="#5a5048" stroke-width="1.1"/><rect x="1350.5" y="150.5" width="6" height="4" fill="#f5f5f5" stroke="#5a5048" stroke-width="1.1"/><path d="M1346.5,165.5 H1356 Q1360,170 1358,172.5 Q1360,176 1359.5,179.5 H1346.5Z" fill="#e8eef6" stroke="#5a7aa8" stroke-width="1"/><line x1="1353.5" y1="165.5" x2="1353.5" y2="179.5" stroke="#8aa0c0" stroke-width="0.8"/><line x1="1346.5" y1="173" x2="1353.5" y2="173" stroke="#8aa0c0" stroke-width="0.8"/><circle cx="1350.2" cy="169.6" r="2.6" fill="#e02828"/><path d="M1347.8,178.5 v-2.5 l2.4,-2.2 l2.4,2.2 v2.5z" fill="#f0a020"/><rect x="1346.5" y="187.5" width="13" height="10" rx="1.5" fill="#fff" stroke="#2a5fae" stroke-width="2"/><line x1="1349" y1="191" x2="1355" y2="191" stroke="#2a5fae"/><line x1="1349" y1="194" x2="1353" y2="194" stroke="#2a5fae"/><rect x="1348" y="199" width="10" height="1.5" fill="#2a5fae"/><rect x="1346.5" y="209.5" width="13" height="10" rx="1.5" fill="#fff" stroke="#2a5fae" stroke-width="2"/><line x1="1349" y1="213" x2="1355" y2="213" stroke="#2a5fae"/><line x1="1349" y1="216" x2="1353" y2="216" stroke="#2a5fae"/><rect x="1348" y="221" width="10" height="1.5" fill="#2a5fae"/><rect x="1346.5" y="230.5" width="13" height="16" fill="#fff" stroke="#777" stroke-width="1"/><text x="1353" y="237" font-size="6" font-weight="bold" font-family="Liberation Sans" text-anchor="middle" fill="#2a9ae0">LOG</text><g stroke="#888" stroke-width="0.8"><line x1="1348" y1="239.5" x2="1358" y2="239.5"/><line x1="1348" y1="242" x2="1358" y2="242"/><line x1="1348" y1="244.5" x2="1358" y2="244.5"/></g></svg>
<div class="a" style="left:0px;top:728px;width:1366px;height:40px;background:#0f1722"></div>
<div class="a" style="left:443px;top:728px;width:48px;height:40px;background:#3a414b"></div>
<div class="a" style="left:104px;top:766px;width:39px;height:2px;background:#a6d3f2"></div>
<div class="a" style="left:300px;top:766px;width:31px;height:2px;background:#a6d3f2"></div>
<div class="a" style="left:331px;top:766px;width:9px;height:2px;background:#7a8796"></div>
<div class="a" style="left:443px;top:766px;width:48px;height:2px;background:#a6d3f2"></div>
<svg style="left:0px;top:0px" width="1366" height="768" viewBox="0 0 1366 768"><g fill="#fff"><polygon points="15.6,741.5 23,740.6 23,747.6 15.6,747.6"/><polygon points="24.4,740.4 32.4,739.6 32.4,747.6 24.4,747.6"/><polygon points="15.6,749 23,749 23,756 15.6,755.2"/><polygon points="24.4,749 32.4,749 32.4,757 24.4,756.2"/></g><path d="M64,741 h7 l2,2 h11 v13 h-20z" fill="#f8d775"/><rect x="64" y="745" width="20" height="11" fill="#ffe08a"/><rect x="70" y="749" width="8" height="5" fill="#3aa6e6"/><rect x="72" y="753" width="4" height="3" fill="#3aa6e6"/><rect x="115" y="739" width="18" height="18" fill="#fce100"/><polygon points="124.2,748.2 132.5,748.2 124.2,756.6" fill="#0f1722"/><rect x="170" y="741" width="13" height="13" fill="#fff"/><polygon points="170,742 183,742 176.5,748" fill="#0a64c8"/><polygon points="162,740 173,738 173,758 162,756" fill="#0a64c8"/><ellipse cx="167.5" cy="748" rx="3" ry="4" fill="none" stroke="#fff" stroke-width="1.6"/><circle cx="221.5" cy="748" r="11" fill="#f7941e"/><circle cx="223" cy="748" r="10.6" fill="#2c2255"/><g stroke="#fff" stroke-width="1.2"><line x1="214" y1="745" x2="231" y2="745"/><line x1="213.5" y1="748" x2="231.5" y2="748"/><line x1="214" y1="751" x2="231" y2="751"/></g><circle cx="271" cy="748" r="10.5" fill="#00aff0"/><circle cx="264" cy="741" r="5" fill="#00aff0"/><circle cx="278" cy="755" r="5" fill="#00aff0"/><text x="271" y="754" font-size="16" font-weight="bold" font-family="Liberation Sans" text-anchor="middle" fill="#fff">S</text><circle cx="319" cy="748" r="11" fill="#db4437"/><path d="M319,748 L309.5,753.5 A11,11 0 0 0 324.5,757.5Z" fill="#0f9d58"/><path d="M319,748 L324.5,757.5 A11,11 0 0 0 330,748 L319,748Z" fill="#ffcd40"/><path d="M319,748 L309.5,753.5 A11,11 0 0 1 313,740 Z" fill="#0f9d58"/><circle cx="319" cy="748" r="5" fill="#fff"/><circle cx="319" cy="748" r="4" fill="#4285f4"/><circle cx="369" cy="749" r="10" fill="#ff9500"/><circle cx="370" cy="748" r="6" fill="#3a3fbf"/><path d="M359,749 A10,10 0 0 0 379,749 Q377,742 370,744 Q366,748 370,752 Q362,752 361,744Z" fill="#ff5a1e"/><ellipse cx="418" cy="747.5" rx="10.5" ry="11.5" fill="#e8202e"/><ellipse cx="418" cy="747.5" rx="4.6" ry="8.6" fill="#0f1722"/><g transform="translate(454.5,733.25) scale(1.25)"><polygon points="2,3 2,19 7,11" fill="#5aaf45"/><polygon points="2,3 8.5,3 10.3,6 7,11" fill="#0d96dc"/><polygon points="2,19 12,3 18,3 8.5,19" fill="#8dc443"/><polygon points="11,16.5 13.5,12.5 18,19 11.5,19" fill="#0aa6e8"/></g><polyline points="1141,752 1147,746 1153,752" fill="none" stroke="#fff" stroke-width="1.3"/><rect x="1165.5" y="741.5" width="14" height="10" fill="none" stroke="#fff" stroke-width="1.1"/><line x1="1172.5" y1="752" x2="1172.5" y2="756" stroke="#fff"/><line x1="1167" y1="756.5" x2="1178" y2="756.5" stroke="#fff"/><rect x="1162" y="747" width="4" height="8" fill="#0f1722" stroke="#fff" stroke-width="1"/><path d="M1187,745 h3 l4,-4 v14 l-4,-4 h-3z" fill="none" stroke="#fff" stroke-width="1.1"/><path d="M1197,744 q3,4 0,8 M1200,742 q5,6 0,12" fill="none" stroke="#fff" stroke-width="1.1"/><path d="M1325.5,739.5 h16 v12 h-9 l-4,4 v-4 h-3z" fill="none" stroke="#fff" stroke-width="1.1"/></svg>
<div class="a" style="left:1363px;top:728px;width:1px;height:40px;background:#5a6270"></div>
<div class="t" style="left:1212px;top:744.23px;font-size:11.9px;color:#fff;">ENG</div>
<div class="t" style="left:1253px;top:735.23px;font-size:11.9px;color:#fff;">09:47 AM</div>
<div class="t" style="left:1248px;top:752.23px;font-size:11.9px;color:#fff;">26-04-2019</div></body></html>
